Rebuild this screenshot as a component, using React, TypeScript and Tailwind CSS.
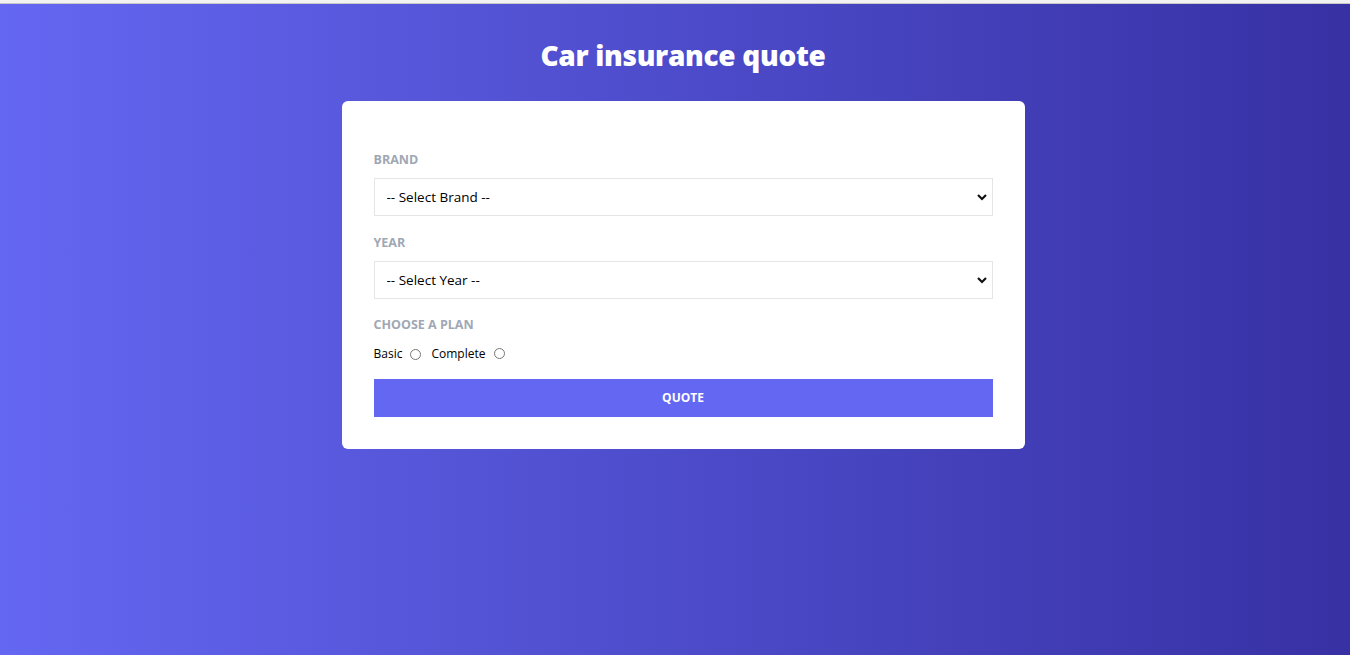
import React from "react";

function Chevron() {
  return (
    <svg width="10" height="8" viewBox="0 0 10 8" className="pointer-events-none absolute right-[6px] top-1/2 -translate-y-1/2">
      <path d="M1 2 L5 6 L9 2" fill="none" stroke="#111" strokeWidth="2.2" />
    </svg>
  );
}

function Field({ label, placeholder }: { label: string; placeholder: string }) {
  return (
    <div className="flex flex-col">
      <label className="text-[12.5px] leading-[16px] font-bold uppercase text-[#a0a7b5] mb-[10px]">{label}</label>
      <div className="relative">
        <select className="w-full h-[38px] appearance-none border border-[#e5e5e5] bg-white pl-[12px] pr-[24px] text-[13.5px] text-black outline-none">
          <option>{placeholder}</option>
        </select>
        <Chevron />
      </div>
    </div>
  );
}

export default function App() {
  return (
    <div
      className="min-h-[655px] w-full overflow-hidden flex flex-col"
      style={{ fontFamily: '"Open Sans", "Noto Sans", sans-serif' }}
    >
      <div className="h-[4px] bg-[#f2f2f2] border-b border-[#c8c8c8] shrink-0" />
      <div className="flex-1 w-[1366px] bg-gradient-to-r from-[#6467f2] to-[#3730a3] flex flex-col items-center">
        <h1 className="mt-[34px] text-[28px] leading-[34px] font-extrabold text-white tracking-[-0.3px]">Car insurance quote</h1>
        <div className="mt-[29px] w-[683px] bg-white rounded-[6px] px-[32px] pt-[51px] pb-[32px] flex flex-col">
          <Field label="Brand" placeholder="-- Select Brand --" />
          <div className="h-[19px]" />
          <Field label="Year" placeholder="-- Select Year --" />
          <label className="mt-[18px] text-[12.5px] leading-[16px] font-bold uppercase text-[#a0a7b5]">Choose a plan</label>
          <div className="mt-[13px] flex items-center text-[12px] leading-[16px] text-black">
            <span>Basic</span>
            <input type="radio" name="plan" className="ml-[8px] w-[11px] h-[11px] m-0" />
            <span className="ml-[10px]">Complete</span>
            <input type="radio" name="plan" className="ml-[9px] w-[11px] h-[11px] m-0 -translate-y-[1px]" />
          </div>
          <button className="mt-[17px] h-[38px] w-full bg-[#6467f2] text-white text-[12px] font-bold uppercase">Quote</button>
        </div>
      </div>
    </div>
  );
}
